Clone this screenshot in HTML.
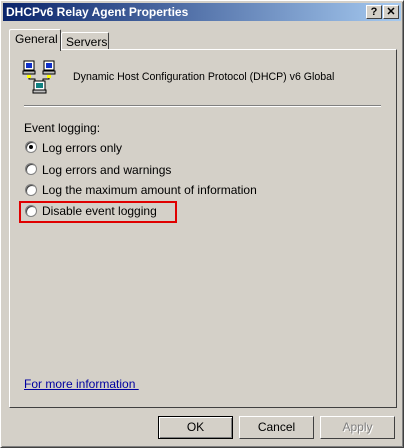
<!DOCTYPE html>
<html><head><style>
*{margin:0;padding:0;box-sizing:border-box}
body{width:404px;height:448px;background:#d4d0c8;font-family:"Liberation Sans",sans-serif;font-size:11px;color:#000;position:relative;overflow:hidden}
.win{position:absolute;left:0;top:0;width:404px;height:448px;border:1px solid #fff;border-right-color:#404040;border-bottom-color:#404040;box-shadow:inset 1px 1px #d4d0c8,inset -1px -1px #808080}
.title{position:absolute;left:3px;top:3px;width:398px;height:18px;background:linear-gradient(90deg,#0a246a,#a6caf0);color:#fff;font-weight:bold;font-size:12px;line-height:18px;padding-left:3px}
.tb{position:absolute;top:5px;width:16px;height:14px;background:#d4d0c8;border:1px solid #fff;border-right-color:#404040;border-bottom-color:#404040;color:#000;font-weight:bold;font-size:11px;line-height:12px;text-align:center}
.abs{position:absolute;white-space:nowrap}
.panel{position:absolute;left:9px;top:49px;width:388px;height:359px;border:1px solid #fff;border-right-color:#404040;border-bottom-color:#404040}
.tab{position:absolute;background:#d4d0c8;border:1px solid #fff;border-bottom:none;border-right-color:#404040;border-radius:2px 2px 0 0}
.radio{position:absolute;left:25px;width:12px;height:12px;border-radius:50%;background:#fff;border:1px solid #808080;box-shadow:inset 1px 1px #404040}
.btn{position:absolute;top:416px;width:75px;height:23px;border:1px solid #fff;border-right-color:#404040;border-bottom-color:#404040;text-align:center;line-height:21px;font-size:12px}
</style></head><body>
<div class="win"></div>
<div class="title">DHCPv6 Relay Agent Properties</div>
<div class="tb" style="left:366px">?</div>
<div class="tb" style="left:383px">✕</div>
<div class="panel"></div>
<div class="tab" style="left:61px;top:32px;width:48px;height:17px"></div>
<div class="abs" style="left:66px;top:35px;font-size:12px">Servers</div>
<div class="tab" style="left:9px;top:29px;width:52px;height:22px;border-right:1px solid #404040"></div>
<div class="abs" style="left:15px;top:32px;font-size:12px">General</div>
<svg class="abs" style="left:22px;top:60px" width="36" height="34" viewBox="0 0 36 34">
<g><rect x="2" y="1" width="10" height="9" fill="#fff" stroke="#000"/><rect x="4" y="3" width="6" height="5" fill="#1030c8"/><rect x="1" y="11" width="12" height="3" fill="#c0c0c0" stroke="#000"/></g>
<g><rect x="22" y="1" width="10" height="9" fill="#fff" stroke="#000"/><rect x="24" y="3" width="6" height="5" fill="#1030c8"/><rect x="21" y="11" width="12" height="3" fill="#c0c0c0" stroke="#000"/></g>
<path d="M7 15v4h6v6M27 15v4h-6v6" stroke="#000" fill="none"/>
<rect x="5" y="15" width="4" height="3" fill="#ff0"/><rect x="25" y="15" width="4" height="3" fill="#ff0"/>
<rect x="12" y="21" width="11" height="9" fill="#fff" stroke="#000"/><rect x="14" y="23" width="7" height="5" fill="#108080"/><rect x="11" y="30" width="13" height="3" fill="#c0c0c0" stroke="#000"/>
</svg>
<div class="abs" style="left:73px;top:71px;font-size:10.6px">Dynamic Host Configuration Protocol (DHCP) v6 Global</div>
<div class="abs" style="left:24px;top:105px;width:357px;height:2px;border-top:1px solid #808080;border-bottom:1px solid #fff"></div>
<div class="abs" style="left:24px;top:121px;font-size:12px">Event logging:</div>
<div class="radio" style="top:141px"></div><div class="abs" style="left:29px;top:145px;width:4px;height:4px;background:#000;border-radius:50%"></div>
<div class="abs" style="left:42px;top:141px;font-size:12px">Log errors only</div>
<div class="radio" style="top:163px"></div><div class="abs" style="left:42px;top:163px;font-size:12px">Log errors and warnings</div>
<div class="radio" style="top:184px"></div><div class="abs" style="left:42px;top:183px;font-size:12px">Log the maximum amount of information</div>
<div class="radio" style="top:205px"></div><div class="abs" style="left:42px;top:204px;font-size:12px">Disable event logging</div>
<div class="abs" style="left:19px;top:201px;width:158px;height:22px;border:2px solid #e00000"></div>
<div class="abs" style="left:24px;top:377px;font-size:12px;color:#0000a0;text-decoration:underline">For more information&nbsp;</div>
<div class="btn" style="left:158px;border:1px solid #000;box-shadow:inset 1px 1px #fff,inset -1px -1px #808080">OK</div>
<div class="btn" style="left:239px">Cancel</div>
<div class="btn" style="left:320px;color:#808080;text-shadow:1px 1px #fff">Apply</div>
</body></html>
